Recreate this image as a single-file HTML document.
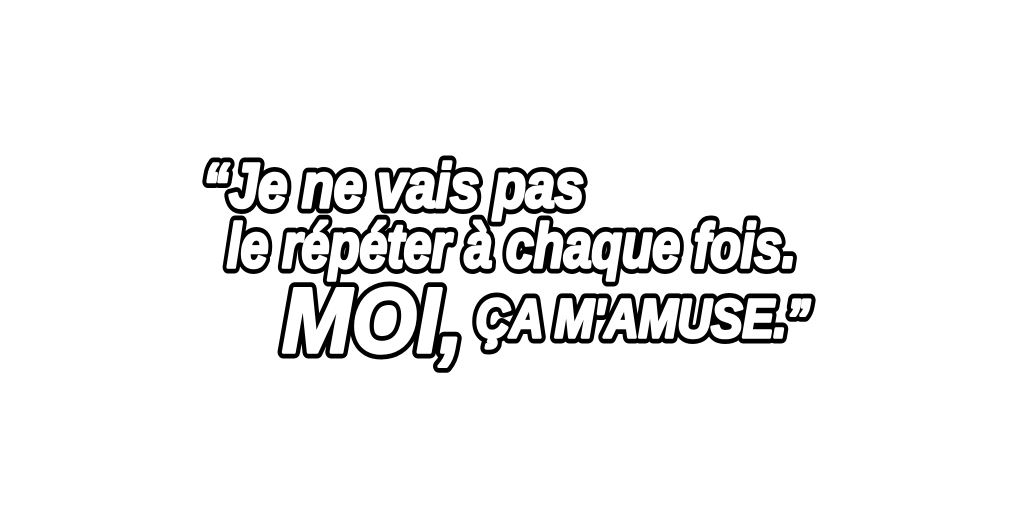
<!DOCTYPE html>
<html><head><meta charset="utf-8"><style>
html,body{margin:0;padding:0;background:#fff;width:1024px;height:512px;overflow:hidden}
svg{display:block}
text{font-family:"Liberation Sans",sans-serif;font-weight:bold;font-style:italic;stroke-linejoin:round}
.b{fill:#000;stroke:#000;stroke-width:13}
.w{fill:#fff;stroke:#fff;stroke-width:3.5}
</style></head><body>
<svg width="1024" height="512" viewBox="0 0 1024 512">
<text class="b" x="203" y="207" font-size="62" textLength="381" lengthAdjust="spacingAndGlyphs">“Je ne vais pas</text>
<text class="b" x="227" y="267" font-size="62" textLength="569" lengthAdjust="spacingAndGlyphs">le répéter à chaque fois.</text>
<text class="b" x="282" y="352" font-size="92" textLength="181" lengthAdjust="spacingAndGlyphs">MOI,</text>
<text class="b" x="476" y="337" font-size="54" textLength="334" lengthAdjust="spacingAndGlyphs">ÇA M'AMUSE.”</text>
<text class="w" x="203" y="207" font-size="62" textLength="381" lengthAdjust="spacingAndGlyphs">“Je ne vais pas</text>
<text class="w" x="227" y="267" font-size="62" textLength="569" lengthAdjust="spacingAndGlyphs">le répéter à chaque fois.</text>
<text class="w" x="282" y="352" font-size="92" textLength="181" lengthAdjust="spacingAndGlyphs">MOI,</text>
<text class="w" x="476" y="337" font-size="54" textLength="334" lengthAdjust="spacingAndGlyphs">ÇA M'AMUSE.”</text>
</svg>
</body></html>
